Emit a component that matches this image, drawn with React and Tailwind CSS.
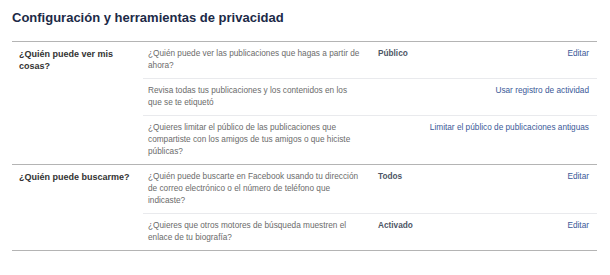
import React from "react";

const sections = [
  {
    label: ["¿Quién puede ver mis", "cosas?"],
    rows: [
      {
        desc: ["¿Quién puede ver las publicaciones que hagas a partir de", "ahora?"],
        value: "Público",
        link: "Editar",
      },
      {
        desc: ["Revisa todas tus publicaciones y los contenidos en los", "que se te etiquetó"],
        link: "Usar registro de actividad",
      },
      {
        desc: [
          "¿Quieres limitar el público de las publicaciones que",
          "compartiste con los amigos de tus amigos o que hiciste",
          "públicas?",
        ],
        link: "Limitar el público de publicaciones antiguas",
      },
    ],
  },
  {
    label: ["¿Quién puede buscarme?"],
    rows: [
      {
        desc: [
          "¿Quién puede buscarte en Facebook usando tu dirección",
          "de correo electrónico o el número de teléfono que",
          "indicaste?",
        ],
        value: "Todos",
        link: "Editar",
      },
      {
        desc: ["¿Quieres que otros motores de búsqueda muestren el", "enlace de tu biografía?"],
        value: "Activado",
        link: "Editar",
      },
    ],
  },
];

function SettingRow({ row, last }) {
  return (
    <div
      className={`flex items-start py-[6px] pl-[5px] pr-[8px] ${
        last ? "" : "border-b border-[#e9eaed]"
      }`}
    >
      <div className="w-[225px] shrink-0 text-[#6b6b6b] whitespace-nowrap">
        {row.desc.map((line, i) => (
          <div key={i}>{line}</div>
        ))}
      </div>
      {row.value && (
        <div className="w-[60px] shrink-0 pl-[5px] font-bold text-[#4e5665]">
          {row.value}
        </div>
      )}
      <div className="flex-1 text-right text-[#3b5998] whitespace-nowrap">
        {row.link}
      </div>
    </div>
  );
}

export default function App() {
  return (
    <div
      className="w-[610px] h-[275px] bg-white pl-[12px] pr-[13px] text-[8.25px] leading-[12px]"
      style={{ fontFamily: '"Liberation Sans", Arial, sans-serif' }}
    >
      {/* Header */}
      <div className="pt-[10px] pb-[15px] border-b border-[#b4b4b4]">
        <h1 className="text-[13px] leading-[16px] font-bold text-[#1c2a47]">
          Configuración y herramientas de privacidad
        </h1>
      </div>

      {/* Sections */}
      {sections.map((section, si) => (
        <div key={si} className="flex border-b border-[#b4b4b4]">
          <div className="w-[131px] shrink-0 pl-[7px] py-[6px] text-[9px] leading-[12px] font-bold text-[#333333]">
            {section.label.map((line, i) => (
              <div key={i}>{line}</div>
            ))}
          </div>
          <div className="flex-1">
            {section.rows.map((row, ri) => (
              <SettingRow key={ri} row={row} last={ri === section.rows.length - 1} />
            ))}
          </div>
        </div>
      ))}
    </div>
  );
}
